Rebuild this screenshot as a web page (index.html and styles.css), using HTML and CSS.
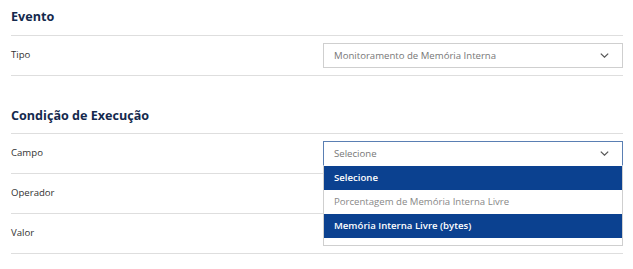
FILE: index.html
```html
<!DOCTYPE html>
<html lang="pt">
<head>
<meta charset="utf-8">
<link rel="stylesheet" href="styles.css">
</head>
<body>
<div class="page">
  <section class="group">
    <h2 class="group-title first">Evento</h2>
    <div class="row">
      <div class="label">Tipo</div>
      <div class="field">
        <div class="select">
          <span class="value">Monitoramento de Memória Interna</span>
          <svg class="chev" width="9" height="5" viewBox="0 0 9 5"><path d="M0.8 0.6l3.7 3.6 3.7-3.6" fill="none" stroke="#555" stroke-width="1.2"/></svg>
        </div>
      </div>
    </div>
  </section>
  <section class="group">
    <h2 class="group-title">Condição de Execução</h2>
    <div class="row">
      <div class="label">Campo</div>
      <div class="field">
        <div class="select focused">
          <span class="value">Selecione</span>
          <svg class="chev" width="9" height="5" viewBox="0 0 9 5"><path d="M0.8 0.6l3.7 3.6 3.7-3.6" fill="none" stroke="#555" stroke-width="1.2"/></svg>
        </div>
        <ul class="menu">
          <li class="opt active">Selecione</li>
          <li class="opt">Porcentagem de Memória Interna Livre</li>
          <li class="opt active">Memória Interna Livre (bytes)</li>
        </ul>
      </div>
    </div>
    <div class="row">
      <div class="label">Operador</div>
      <div class="field"></div>
    </div>
    <div class="row">
      <div class="label">Valor</div>
      <div class="field"></div>
    </div>
  </section>
</div>
</body>
</html>
```
FILE: styles.css
```css
* { box-sizing: border-box; }
html, body { margin: 0; padding: 0; background: #fff; }
body { font-family: "Open Sans", "Noto Sans", sans-serif; color: #333; }
.page { padding: 0 10px 0 11px; }
.group-title {
  margin: 0;
  font-size: 12.6px;
  font-weight: 700;
  color: #14294d;
  height: 36px;
  line-height: 34px;
  border-bottom: 1px solid #dedede;
}
.group-title:not(.first) { margin-top: 21px; height: 37px; line-height: 37px; }
.row {
  display: flex;
  align-items: center;
  height: 40px;
  border-bottom: 1px solid #dedede;
}
.label { width: 312px; font-size: 9.6px; color: #333; line-height: 14px; margin-top: -2px; }
.field { flex: 1; position: relative; }
.select {
  height: 25px;
  border: 1px solid #cfcfcf;
  display: flex;
  align-items: center;
  justify-content: space-between;
  padding: 0 13px 0 10px;
  font-size: 9.6px;
  color: #777;
}
.select.focused { border-color: #5a7fb3; border-bottom-color: transparent; }
.chev { display: block; }
.menu {
  position: absolute;
  left: 0; right: 0;
  top: 25px;
  margin: 0; padding: 0 0 7px;
  list-style: none;
  background: #fff;
  border: 1px solid #cfcfcf;
  border-top: none;
  z-index: 2;
}
.opt {
  height: 24px;
  line-height: 24px;
  padding: 0 10px;
  font-size: 9.6px;
  color: #888;
}
.opt.active { background: #0b4190; color: #fff; font-weight: 600; }
```
